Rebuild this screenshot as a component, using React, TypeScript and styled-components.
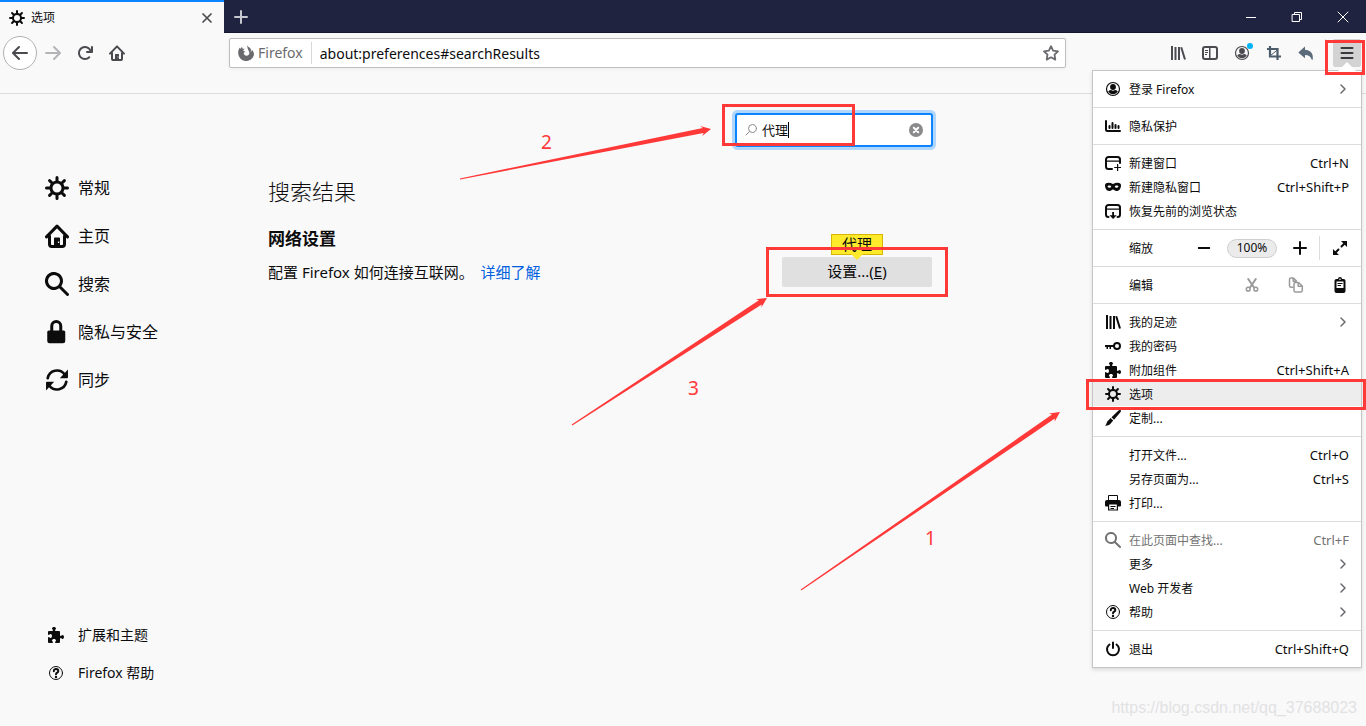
import React, { useState } from 'react';
import styled, { createGlobalStyle, css } from 'styled-components';

const GlobalStyle = createGlobalStyle`
  *, *::before, *::after { box-sizing: border-box; }
  body {
    margin: 0;
    background: #f9f9fa;
    color: #0c0c0d;
    font-family: "Noto Sans", "Noto Sans CJK SC", sans-serif;
    font-size: 15px;
  }
  button, input { font: inherit; color: inherit; }
`;

/* ---------- icons ---------- */

const GEAR =
  'M15 7h-2.1a4.967 4.967 0 0 0-.732-1.753l1.49-1.49a1 1 0 0 0-1.414-1.414l-1.49 1.49A4.968 4.968 0 0 0 9 3.1V1a1 1 0 0 0-2 0v2.1a4.968 4.968 0 0 0-1.753.732l-1.49-1.49a1 1 0 0 0-1.414 1.415l1.49 1.49A4.967 4.967 0 0 0 3.1 7H1a1 1 0 0 0 0 2h2.1a4.968 4.968 0 0 0 .737 1.763l-1.495 1.48a1 1 0 1 0 1.414 1.414l1.48-1.495A4.968 4.968 0 0 0 7 12.9V15a1 1 0 0 0 2 0v-2.1a4.968 4.968 0 0 0 1.753-.732l1.49 1.49a1 1 0 0 0 1.414-1.414l-1.49-1.49A4.967 4.967 0 0 0 12.9 9H15a1 1 0 0 0 0-2zM5 8a3 3 0 1 1 3 3 3 3 0 0 1-3-3z';
const BACK =
  'M15 7H3.414l4.293-4.293a1 1 0 0 0-1.414-1.414l-6 6a1 1 0 0 0 0 1.414l6 6a1 1 0 0 0 1.414-1.414L3.414 9H15a1 1 0 0 0 0-2z';
const RELOAD =
  'M15 1a1 1 0 0 0-1 1v2.418A6.995 6.995 0 1 0 8 15a6.954 6.954 0 0 0 4.95-2.05 1 1 0 0 0-1.414-1.414A5.019 5.019 0 1 1 12.549 6H10a1 1 0 0 0 0 2h5a1 1 0 0 0 1-1V2a1 1 0 0 0-1-1z';
const PUZZLE =
  'M14.5 8c-.971 0-1 1-1.75 1a.765.765 0 0 1-.75-.75V5a1 1 0 0 0-1-1H7.75A.765.765 0 0 1 7 3.25c0-.75 1-.779 1-1.75C8 .635 7.1 0 6 0S4 .635 4 1.5c0 .971 1 1 1 1.75a.765.765 0 0 1-.75.75H1a1 1 0 0 0-1 1v2.25A.765.765 0 0 0 .75 8c.75 0 .779-1 1.75-1C3.365 7 4 7.9 4 9s-.635 2-1.5 2c-.971 0-1-1-1.75-1a.765.765 0 0 0-.75.75V15a1 1 0 0 0 1 1h3.25a.765.765 0 0 0 .75-.75c0-.75-1-.779-1-1.75 0-.865.9-1.5 2-1.5s2 .635 2 1.5c0 .971-1 1-1 1.75a.765.765 0 0 0 .75.75H11a1 1 0 0 0 1-1v-3.25a.765.765 0 0 1 .75-.75c.75 0 .779 1 1.75 1 .865 0 1.5-.9 1.5-2s-.635-2-1.5-2z';
const SEARCH =
  'M15.707 14.293l-4.822-4.822a6.019 6.019 0 1 0-1.414 1.414l4.822 4.822a1 1 0 0 0 1.414-1.414zM6 10a4 4 0 1 1 4-4 4 4 0 0 1-4 4z';

const line = (width = 2) => ({
  fill: 'none',
  stroke: 'currentColor',
  strokeWidth: width,
  strokeLinecap: 'round' as const,
  strokeLinejoin: 'round' as const,
});

const shapes = {
  gear: <path d={GEAR} />,
  back: <path d={BACK} />,
  forward: <path d={BACK} transform="matrix(-1 0 0 1 16 0)" />,
  reload: <path d={RELOAD} />,
  puzzle: <path d={PUZZLE} />,
  search: <path d={SEARCH} />,
  home: (
    <>
      <path {...line()} d="M1 8.6 8 1.4l7 7.2M3 8v5.4c0 .9.6 1.6 1.500 1.600h7c.9 0 1.500-.7 1.500-1.600V8" />
      <path d="M6 15V9.500a.5.5 0 0 1 .5-.5h3a.5.5 0 0 1 .5.5V15H8.600v-2.400h.9v-1h-.9V15z" />
    </>
  ),
  lock: <path d="M7.500 0a4 4 0 0 0-4 4v3H2.500a1 1 0 0 0-1 1v6A1.500 1.500 0 0 0 3 15.500h9a1.500 1.500 0 0 0 1.500-1.500V8a1 1 0 0 0-1-1h-1V4a4 4 0 0 0-4-4zM5.500 7V4a2 2 0 0 1 4 0v3z" />,
  sync: (
    <>
      <path {...line(1.800)} d="M1.800 6.800A6.300 6.300 0 0 1 13 4.200L14 5.400M14.200 9.200A6.300 6.300 0 0 1 3 11.800L2 10.600" />
      <path d="M15.300 1V6.200a.6.600 0 0 1-.6.600H9.900zM.7 15V9.800A.6.600 0 0 1 1.300 9.200h4.800z" />
    </>
  ),
  help: (
    <>
      <circle cx="8" cy="8" r="6.500" {...line(1)} />
      <path {...line(2)} d="M5.800 6.200c0-2.900 4.500-2.700 4.500 0C10.300 7.700 8 7.600 8 9.200" />
      <circle cx="8" cy="12" r="1.200" />
    </>
  ),
  account: (
    <>
      <circle cx="8" cy="8" r="6.500" {...line(1.200)} />
      <circle cx="8" cy="6" r="2.900" />
      <path d="M3.200 10.300c1-.8 2-1.200 2.900-1.200 1.100.8 2.700.8 3.800 0 .9 0 1.900.4 2.900 1.200-.9 1.900-2.800 2.900-4.800 2.900s-3.900-1-4.800-2.900z" />
    </>
  ),
  chart: (
    <>
      <path {...line()} d="M1 3v8.500A1.500 1.500 0 0 0 2.500 13H15" />
      <path {...line(2)} d="M4.500 8v2M7.500 5v5M10.500 7v3M13.500 8V10" />
    </>
  ),
  newWindow: (
    <>
      <path {...line()} d="M7 14H3.500A2.500 2.500 0 0 1 1 11.500v-7A2.500 2.500 0 0 1 3.500 2h9A2.500 2.500 0 0 1 15 4.500V8" />
      <path d="M1 5.500h14v1.300H1zM12 9h1.200v2.900H16v1.200h-2.800V16H12v-2.900H9.200v-1.200H12z" />
    </>
  ),
  restore: (
    <>
      <path {...line()} d="M3.500 14A2.500 2.500 0 0 1 1 11.500v-7A2.500 2.500 0 0 1 3.500 2h9A2.500 2.500 0 0 1 15 4.500v7a2.500 2.500 0 0 1-2.500 2.500" />
      <path d="M1 5.500h14v1.300H1zM4.500 12.300H7.200V9h1.800v3.300h2.700L8.100 16z" />
    </>
  ),
  mask: <path d="M0 6c.3-2.600 4.500-3 8-.9C11.500 3 15.700 3.400 16 6c.2 3.800-2.100 6.200-4.700 6-1.500-.1-2.100-1.600-3.300-1.600S6.200 11.900 4.700 12C2.100 12.200-.2 9.800 0 6zm4.400.6c-1.100 0-1.700.6-1.900 1.100.4.7 1.100 1.100 1.900 1.100s1.500-.4 1.900-1c-.3-.7-1-1.200-1.900-1.200zm7.200 0c-.9 0-1.600.5-1.900 1.200.4.600 1.100 1 1.900 1s1.500-.4 1.900-1.100c-.2-.5-.8-1.100-1.900-1.100z" fillRule="evenodd" />,
  library: <path {...line()} strokeLinecap="butt" d="M2 1v14M5.500 2v13M9 2v13M11.200 2.200 15 14.500" />,
  key: (
    <>
      <circle cx="12" cy="8" r="3" {...line()} />
      <path d="M0 7h9v2H6v2H4.500V9H3v2H1.500V9H0z" />
    </>
  ),
  brush: (
    <>
      <path d="M15.700.3c.6.7.2 1.400-.3 2L9 9.700 6.500 7.200l7-6.600c.7-.6 1.500-.9 2.200-.3z" />
      <path d="M5.600 8 8.200 10.500 6.500 12.500C5 15 2.500 15.800 0 15.600c1.600-.9 1.500-3 2.300-4.200.7-1 1.800-1.200 2.300-2.400z" />
    </>
  ),
  print: (
    <>
      <path {...line(1)} strokeLinejoin="miter" d="M3.500 5V.5h9V5" />
      <path d="M2 5h12a2 2 0 0 1 2 2v3.500a1 1 0 0 1-1 1H1a1 1 0 0 1-1-1V7a2 2 0 0 1 2-2z" />
      <path d="M3 9h10v6.500H3z" />
      <path d="M4.200 9.500h7.600v5H4.200z" fill="#fff" />
      <path d="M5.500 11h5v1h-5zM5.500 13h3.500v1H5.500z" />
    </>
  ),
  power: <path {...line()} d="M4.500 3.500a6 6 0 1 0 7 0M8 1.500V7" />,
  scissors: (
    <>
      <path {...line()} d="M4.200 2 10 10.500M11.800 2 6 10.500" />
      <circle cx="4.200" cy="12.200" r="1.900" {...line(1.500)} />
      <circle cx="11.800" cy="12.200" r="1.900" {...line(1.500)} />
    </>
  ),
  copy: (
    <>
      <path {...line(1.500)} d="M5 10.300H3A1.500 1.500 0 0 1 1.500 8.800V2.500A1.500 1.500 0 0 1 3 1h2.500L8.500 4M5.200 1v3.300h3" />
      <path {...line(1.500)} d="M7.500 5.500h3L14.300 9v4.500A1.500 1.500 0 0 1 12.800 15H7.500A1.500 1.500 0 0 1 6 13.500V7a1.500 1.500 0 0 1 1.500-1.500zM10.200 5.800v3.400h3.800" />
    </>
  ),
  paste: (
    <>
      <path d="M4.500 2H6a2 2 0 0 1 4 0h1.500A2 2 0 0 1 13.500 4v10a2 2 0 0 1-2 2h-7a2 2 0 0 1-2-2V4a2 2 0 0 1 2-2z" />
      <path d="M4.500 4.500h7V11h-7z" fill="#fff" />
      <path d="M5.500 6h5v1h-5zM5.500 8H9v1H5.500z" />
      <circle cx="8" cy="2.200" r=".8" fill="#fff" />
    </>
  ),
  sidebar: (
    <>
      <rect x="1" y="2" width="14" height="12" rx="2" {...line()} />
      <path d="M7 2h1.500v12H7zM3 5h3v1H3zM3 7h3v1H3zM3 9h2v1H3z" />
    </>
  ),
  crop: (
    <>
      <path {...line(2.200)} strokeLinecap="butt" strokeLinejoin="miter" d="M4 1v10.500h11M1 4h10.500v11" />
      <path d="M4.500 10.500 12 4.500" {...line(1)} />
    </>
  ),
  undo: <path d="M7 1.500v3.200c5 .2 8.500 3 7.800 9.500-.1.700-.8.700-1.100.2C12.500 11.500 10.500 10 7 10v3.200L.8 7.900a.7.700 0 0 1 0-1z" />,
  menu: <path {...line()} d="M2.500 3h11M2.500 8h11M2.500 13h11" />,
  star: <path {...line(1.800)} d="M8 1.200 10.100 5.600l4.900.7-3.500 3.400.8 4.900L8 12.300l-4.300 2.300.8-4.900L1 6.300l4.900-.7z" />,
  firefox: <path d="M9.500 0c.1 1.100.9 1.800 1.800 2.500 1.800 1.200 2.100 3 1.200 4.600.9-.4 1.300-1.300 1.300-2.600 1.700 2 2.500 3.800 2 6A8 8 0 0 1 .2 8.500C0 6 .7 4 2 2.500c0 .7.100 1 .4 1.500.3-1 .9-1.700 1.700-2.100 0 .9.300 1.500.8 1.900.8-.1 1.400 0 2 .3-.8.300-1.500.8-1.700 1.500.2.800.9.900 2 .9-.1.800-1.200 1-1.500 1.500.2 2 1.700 2.900 3.200 2.700 2-.3 2.600-1.600 2.400-3.200C10.900 5.300 8.700 3.500 9.500 0z" />,
  close: <path {...line(1.700)} d="M4 4l8 8M12 4l-8 8" />,
  plus: <path {...line()} d="M8 2v12M2 8h12" />,
  minus: <path {...line()} strokeLinecap="butt" d="M2 8h12" />,
  expand: (
    <>
      <path {...line()} d="M9.500 6.500 13 3M6.500 9.500 3 13" />
      <path d="M9 1h6v6L9 1zM1 9v6h6z" />
    </>
  ),
  chevron: <path {...line(1.500)} d="M6 4l4 4-4 4" />,
  winMin: <path d="M3 8h10v1H3z" />,
  winMax: <path {...line(1)} strokeLinejoin="miter" d="M3.500 5.500h7v7h-7zM5.500 5.500v-2h7v7h-2" />,
  winClose: <path {...line(1)} d="M3 3l10 10M13 3 3 13" />,
  magnifier: (
    <>
      <circle cx="9.500" cy="6.500" r="4" {...line(1)} />
      <path {...line(1)} d="M6.600 9.400 3 13" />
    </>
  ),
  clear: (
    <>
      <circle cx="8" cy="8" r="7" />
      <path d="M5.800 5.800l4.400 4.400M10.200 5.800l-4.400 4.400" {...line()} stroke="#fff" />
    </>
  ),
};

type IconName = keyof typeof shapes;

const Svg = styled.svg`
  display: block;
  flex: none;
  fill: currentColor;
`;

const Icon = ({ name, size = 16 }: { name: IconName; size?: number }) => (
  <Svg width={size} height={size} viewBox="0 0 16 16" aria-hidden="true">
    {shapes[name]}
  </Svg>
);

/* ---------- window chrome ---------- */

const Window = styled.div`
  position: relative;
  display: flex;
  flex-direction: column;
  min-height: 100vh;
  overflow: hidden;
`;

const TabBar = styled.header`
  display: flex;
  height: 33px;
  background: #202340;
  color: #fff;
  box-shadow: inset 0 -1px #15172c;
`;

const Tab = styled.div`
  display: flex;
  align-items: center;
  gap: 6px;
  width: 224px;
  padding: 0 9px;
  background: #f9f9fa;
  border-top: 2px solid #0a84ff;
  color: #0c0c0d;
  font-size: 12px;
`;

const TabTitle = styled.span`
  flex: 1;
  padding-bottom: 2px;
`;

const PlainButton = styled.button`
  display: flex;
  align-items: center;
  justify-content: center;
  padding: 0;
  border: 0;
  background: none;
`;

const TabClose = styled(PlainButton)`
  color: #4a4a4f;
`;

const NewTab = styled(PlainButton)`
  width: 34px;
  color: #c7c7cf;
`;

const WindowControls = styled.div`
  display: flex;
  margin-left: auto;
`;

const WindowButton = styled(PlainButton)`
  width: 46px;
`;

const NavBar = styled.nav`
  display: flex;
  align-items: center;
  height: 61px;
  padding: 0 5px 20px 3px;
  border-bottom: 1px solid #dcdcdd;
`;

const ToolButton = styled(PlainButton)<{ $tone?: string }>`
  position: relative;
  width: 32px;
  height: 32px;
  color: ${(p) => p.$tone ?? '#4a4a4f'};
`;

const BackButton = styled(PlainButton)`
  width: 34px;
  height: 34px;
  border: 1px solid #b1b1b3;
  border-radius: 50%;
  background: #fff;
  color: #4a4a4f;
`;

const Dot = styled.span`
  position: absolute;
  top: 6px;
  right: 5px;
  width: 6px;
  height: 6px;
  border-radius: 50%;
  background: #00b3f4;
`;

const UrlBar = styled.div`
  display: flex;
  flex: 1;
  align-items: center;
  height: 30px;
  margin: 0 96px;
  padding: 0 6px 0 8px;
  border: 1px solid #bdbdbe;
  border-radius: 2px;
  background: #fff;
  color: #6a6a6e;
  font-size: 14px;
  box-shadow: 0 1px 4px rgba(0, 0, 0, 0.05);
`;

const Identity = styled.span`
  padding: 0 8px 0 4px;
  border-right: 1px solid #d7d7db;
  line-height: 22px;
`;

const UrlInput = styled.input`
  flex: 1;
  min-width: 0;
  padding: 0 8px;
  border: 0;
  outline: 0;
  background: none;
  color: #0c0c0d;
`;

const MenuButtonSlot = styled.div`
  margin-left: 3px;
  padding-left: 7px;
  border-left: 1px solid #dcdcdd;
`;

const MenuButton = styled(PlainButton)`
  width: 28px;
  height: 28px;
  border-radius: 2px;
  background: #d3d3d4;
  color: #3a3a3e;
`;

/* ---------- preferences page ---------- */

const Page = styled.div`
  display: flex;
  flex: 1;
`;

const Sidebar = styled.aside`
  display: flex;
  flex-direction: column;
  justify-content: space-between;
  width: 268px;
  padding: 70px 0 34px 45px;
`;

const NavList = styled.div`
  display: flex;
  flex-direction: column;
`;

const Category = styled.a<{ $small?: boolean }>`
  display: flex;
  align-items: center;
  height: ${(p) => (p.$small ? 38 : 48)}px;
  gap: ${(p) => (p.$small ? 14 : 9)}px;
  padding-left: ${(p) => (p.$small ? 3 : 0)}px;
  color: #0c0c0d;
  font-size: ${(p) => (p.$small ? 14 : 16)}px;
  text-decoration: none;
`;

const CategoryLabel = styled.span`
  padding-bottom: 2px;
`;

const Main = styled.main`
  flex: 1;
  max-width: 664px;
  padding-top: 20px;
`;

const SearchRow = styled.div`
  display: flex;
  justify-content: flex-end;
`;

const SearchBox = styled.label`
  display: flex;
  align-items: center;
  width: 196px;
  height: 32px;
  padding: 0 7px 0 6px;
  border: 1px solid #0a84ff;
  border-radius: 2px;
  background: #fff;
  color: #8a8a8c;
  font-size: 13px;
  box-shadow: 0 0 0 1px #0a84ff, 0 0 0 4px rgba(10, 132, 255, 0.3);
`;

const SearchInput = styled.input`
  width: 26px;
  margin-left: 3px;
  padding: 0 0 2px;
  border: 0;
  outline: 0;
  color: #0c0c0d;
`;

const Caret = styled.span`
  width: 1px;
  height: 16px;
  margin-right: auto;
  background: #000;
`;

const PageTitle = styled.h1`
  margin: 27px 0 0;
  font-size: 22px;
  font-weight: 300;
  line-height: 36px;
`;

const SectionTitle = styled.h2`
  margin: 16px 0 0;
  font-size: 17px;
  font-weight: 700;
  line-height: 28px;
`;

const SettingRow = styled.div`
  display: flex;
  align-items: center;
  justify-content: space-between;
  margin-top: 4px;
`;

const Description = styled.p`
  margin: 0;
  padding-bottom: 2px;
`;

const LearnMore = styled.a`
  margin-left: 3px;
  color: #0060df;
  text-decoration: none;
`;

const ButtonWrap = styled.div`
  position: relative;
`;

const SettingsButton = styled.button`
  width: 150px;
  height: 30px;
  padding: 0 0 3px;
  border: 0;
  border-radius: 2px;
  background: #e0e0e1;
`;

const SearchTip = styled.span`
  position: absolute;
  bottom: 32px;
  left: 49px;
  width: 52px;
  height: 21px;
  border: 1px solid #d7b600;
  background: #ffe92b;
  line-height: 19px;
  text-align: center;

  &::after {
    content: '';
    position: absolute;
    top: 19px;
    left: 19px;
    border: 6px solid transparent;
    border-top-color: #ffe92b;
    border-bottom: 0;
  }
`;

/* ---------- application menu ---------- */

const Menu = styled.div`
  position: absolute;
  top: 70px;
  right: 4px;
  width: 270px;
  border: 1px solid #c6c6c7;
  background: #fff;
  font-size: 12px;
  box-shadow: 0 2px 4px rgba(0, 0, 0, 0.12);

  &::before {
    content: '';
    position: absolute;
    top: -9px;
    right: 4px;
    border: 10px solid transparent;
    border-top: 0;
    border-bottom-color: #fff;
  }
`;

const Group = styled.div`
  padding: 6px 0;

  & + & {
    border-top: 1px solid #dcdcdd;
  }
`;

const rowLayout = css`
  display: flex;
  align-items: center;
  width: 100%;
  height: 24px;
  padding: 0 12px;
`;

const MenuItem = styled.button<{ $active?: boolean; $muted?: boolean }>`
  ${rowLayout}
  gap: 8px;
  border: 0;
  background: ${(p) => (p.$active ? '#ededed' : 'none')};
  color: ${(p) => (p.$muted ? '#737373' : '#0c0c0d')};
  text-align: left;
`;

const IconSlot = styled.span`
  flex: none;
  width: 16px;
`;

const ItemLabel = styled.span`
  flex: 1;
`;

const Shortcut = styled.span`
  font-size: 13px;
`;

const Chevron = styled.span`
  margin-right: -2px;
  color: #6a6a6e;
`;

const ControlRow = styled.div`
  ${rowLayout}
  padding: 0 13px 0 36px;
`;

const ControlButton = styled(PlainButton)<{ $muted?: boolean }>`
  width: 16px;
  height: 24px;
  margin-left: 28px;
  color: ${(p) => (p.$muted ? '#9a9a9b' : '#0c0c0d')};
`;

const ZoomButton = styled(PlainButton)`
  width: 16px;
  height: 24px;
`;

const ZoomLevel = styled.button`
  width: 50px;
  height: 19px;
  margin: 0 15px;
  padding: 0;
  border: 1px solid #cfcfd0;
  border-radius: 10px;
  background: #ebebec;
  line-height: 16px;
`;

const ZoomDivider = styled.span`
  height: 24px;
  margin: 0 12px 0 11px;
  border-left: 1px solid #dcdcdd;
`;

type Entry = {
  label: string;
  icon?: IconName;
  keys?: string;
  sub?: boolean;
  active?: boolean;
  muted?: boolean;
};

const topGroups: Entry[][] = [
  [{ label: '登录 Firefox', icon: 'account', sub: true }],
  [{ label: '隐私保护', icon: 'chart' }],
  [
    { label: '新建窗口', icon: 'newWindow', keys: 'Ctrl+N' },
    { label: '新建隐私窗口', icon: 'mask', keys: 'Ctrl+Shift+P' },
    { label: '恢复先前的浏览状态', icon: 'restore' },
  ],
];

const bottomGroups: Entry[][] = [
  [
    { label: '我的足迹', icon: 'library', sub: true },
    { label: '我的密码', icon: 'key' },
    { label: '附加组件', icon: 'puzzle', keys: 'Ctrl+Shift+A' },
    { label: '选项', icon: 'gear', active: true },
    { label: '定制...', icon: 'brush' },
  ],
  [
    { label: '打开文件...', keys: 'Ctrl+O' },
    { label: '另存页面为...', keys: 'Ctrl+S' },
    { label: '打印...', icon: 'print' },
  ],
  [
    { label: '在此页面中查找...', icon: 'search', keys: 'Ctrl+F', muted: true },
    { label: '更多', sub: true },
    { label: 'Web 开发者', sub: true },
    { label: '帮助', icon: 'help', sub: true },
  ],
  [{ label: '退出', icon: 'power', keys: 'Ctrl+Shift+Q' }],
];

const MenuGroups = ({ groups }: { groups: Entry[][] }) => (
  <>
    {groups.map((entries) => (
      <Group key={entries[0].label}>
        {entries.map((e) => (
          <MenuItem key={e.label} type="button" $active={e.active} $muted={e.muted}>
            <IconSlot>{e.icon && <Icon name={e.icon} />}</IconSlot>
            <ItemLabel>{e.label}</ItemLabel>
            {e.keys && <Shortcut>{e.keys}</Shortcut>}
            {e.sub && (
              <Chevron>
                <Icon name="chevron" />
              </Chevron>
            )}
          </MenuItem>
        ))}
      </Group>
    ))}
  </>
);

/* ---------- tutorial marks drawn over the window ---------- */

const Frame = styled.div<{ $x: number; $y: number; $w: number; $h: number; $fromRight?: boolean }>`
  position: absolute;
  top: ${(p) => p.$y}px;
  ${(p) => (p.$fromRight ? 'right' : 'left')}: ${(p) => p.$x}px;
  width: ${(p) => p.$w}px;
  height: ${(p) => p.$h}px;
  border: 3px solid #ff3838;
  pointer-events: none;
`;

const Arrows = styled.svg`
  position: absolute;
  top: 0;
  left: 0;
  fill: #ff3838;
  pointer-events: none;
`;

const StepNumber = styled.span<{ $x: number; $y: number }>`
  position: absolute;
  top: ${(p) => p.$y}px;
  left: ${(p) => p.$x}px;
  color: #ff3838;
  font-size: 19px;
  line-height: 24px;
`;

const Watermark = styled.span`
  position: absolute;
  right: 9px;
  bottom: 8px;
  color: #e2e2e3;
  font-family: "Liberation Sans", sans-serif;
  font-size: 16px;
  line-height: 20px;
`;

/* Thin at the tail, widening to a barbed head at the tip. */
const taper = (x1: number, y1: number, x2: number, y2: number) => {
  const len = Math.hypot(x2 - x1, y2 - y1);
  const ux = (x2 - x1) / len;
  const uy = (y2 - y1) / len;
  const at = (back: number, side: number) =>
    `${(x2 - ux * back - uy * side).toFixed(1)},${(y2 - uy * back + ux * side).toFixed(1)}`;
  return [at(len, 0.5), at(8, 2.5), at(10, 5), at(0, 0), at(10, -5), at(8, -2.5), at(len, -0.5)].join(' ');
};

const categories: { label: string; icon: IconName }[] = [
  { label: '常规', icon: 'gear' },
  { label: '主页', icon: 'home' },
  { label: '搜索', icon: 'search' },
  { label: '隐私与安全', icon: 'lock' },
  { label: '同步', icon: 'sync' },
];

export default function App() {
  const [query, setQuery] = useState('代理');
  const [url, setUrl] = useState('about:preferences#searchResults');

  return (
    <>
      <GlobalStyle />
      <Window>
        <TabBar>
          <Tab>
            <Icon name="gear" />
            <TabTitle>选项</TabTitle>
            <TabClose type="button" aria-label="关闭标签页">
              <Icon name="close" />
            </TabClose>
          </Tab>
          <NewTab type="button" aria-label="新建标签页">
            <Icon name="plus" />
          </NewTab>
          <WindowControls>
            <WindowButton type="button" aria-label="最小化"><Icon name="winMin" /></WindowButton>
            <WindowButton type="button" aria-label="还原"><Icon name="winMax" /></WindowButton>
            <WindowButton type="button" aria-label="关闭"><Icon name="winClose" /></WindowButton>
          </WindowControls>
        </TabBar>

        <NavBar>
          <BackButton type="button" aria-label="后退"><Icon name="back" /></BackButton>
          <ToolButton type="button" aria-label="前进" $tone="#b5b5b7"><Icon name="forward" /></ToolButton>
          <ToolButton type="button" aria-label="刷新"><Icon name="reload" /></ToolButton>
          <ToolButton type="button" aria-label="主页"><Icon name="home" /></ToolButton>
          <UrlBar>
            <Icon name="firefox" />
            <Identity>Firefox</Identity>
            <UrlInput aria-label="地址" value={url} onChange={(e) => setUrl(e.target.value)} />
            <Icon name="star" />
          </UrlBar>
          <ToolButton type="button" aria-label="我的足迹"><Icon name="library" /></ToolButton>
          <ToolButton type="button" aria-label="侧栏"><Icon name="sidebar" /></ToolButton>
          <ToolButton type="button" aria-label="账户"><Icon name="account" /><Dot /></ToolButton>
          <ToolButton type="button" aria-label="截图" $tone="#4d5c6b"><Icon name="crop" /></ToolButton>
          <ToolButton type="button" aria-label="撤销" $tone="#5b6b7a"><Icon name="undo" /></ToolButton>
          <MenuButtonSlot>
            <MenuButton type="button" aria-label="打开菜单"><Icon name="menu" /></MenuButton>
          </MenuButtonSlot>
        </NavBar>

        <Page>
          <Sidebar>
            <NavList>
              {categories.map((c) => (
                <Category key={c.label} href="#">
                  <Icon name={c.icon} size={24} />
                  <CategoryLabel>{c.label}</CategoryLabel>
                </Category>
              ))}
            </NavList>
            <NavList>
              <Category href="#" $small>
                <Icon name="puzzle" />
                <CategoryLabel>扩展和主题</CategoryLabel>
              </Category>
              <Category href="#" $small>
                <Icon name="help" />
                <CategoryLabel>Firefox 帮助</CategoryLabel>
              </Category>
            </NavList>
          </Sidebar>
          <Main>
            <SearchRow>
              <SearchBox>
                <Icon name="magnifier" />
                <SearchInput aria-label="搜索选项" value={query} onChange={(e) => setQuery(e.target.value)} />
                <Caret />
                <Icon name="clear" />
              </SearchBox>
            </SearchRow>
            <PageTitle>搜索结果</PageTitle>
            <SectionTitle>网络设置</SectionTitle>
            <SettingRow>
              <Description>
                配置 Firefox 如何连接互联网。 <LearnMore href="#">详细了解</LearnMore>
              </Description>
              <ButtonWrap>
                <SettingsButton type="button">设置...(<u>E</u>)</SettingsButton>
                <SearchTip>代理</SearchTip>
              </ButtonWrap>
            </SettingRow>
          </Main>
        </Page>

        <Menu>
          <MenuGroups groups={topGroups} />
          <Group>
            <ControlRow>
              <ItemLabel>缩放</ItemLabel>
              <ZoomButton type="button" aria-label="缩小"><Icon name="minus" /></ZoomButton>
              <ZoomLevel type="button">100%</ZoomLevel>
              <ZoomButton type="button" aria-label="放大"><Icon name="plus" /></ZoomButton>
              <ZoomDivider />
              <ZoomButton type="button" aria-label="全屏"><Icon name="expand" /></ZoomButton>
            </ControlRow>
          </Group>
          <Group>
            <ControlRow>
              <ItemLabel>编辑</ItemLabel>
              <ControlButton type="button" aria-label="剪切" $muted><Icon name="scissors" /></ControlButton>
              <ControlButton type="button" aria-label="复制" $muted><Icon name="copy" /></ControlButton>
              <ControlButton type="button" aria-label="粘贴"><Icon name="paste" /></ControlButton>
            </ControlRow>
          </Group>
          <MenuGroups groups={bottomGroups} />
        </Menu>

        <Watermark>https://blog.csdn.net/qq_37688023</Watermark>

        <Arrows width="1366" height="726" aria-hidden="true">
          <polygon points={taper(460, 179, 711, 129)} />
          <polygon points={taper(572, 425, 767, 298)} />
          <polygon points={taper(801, 590, 1060, 412)} />
        </Arrows>
        <Frame $x={722} $y={104} $w={133} $h={42} />
        <Frame $x={766} $y={247} $w={182} $h={50} />
        <Frame $x={1} $y={40} $w={40} $h={35} $fromRight />
        <Frame $x={0} $y={379} $w={280} $h={31} $fromRight />
        <StepNumber $x={541} $y={130}>2</StepNumber>
        <StepNumber $x={688} $y={376}>3</StepNumber>
        <StepNumber $x={925} $y={526}>1</StepNumber>
      </Window>
    </>
  );
}
